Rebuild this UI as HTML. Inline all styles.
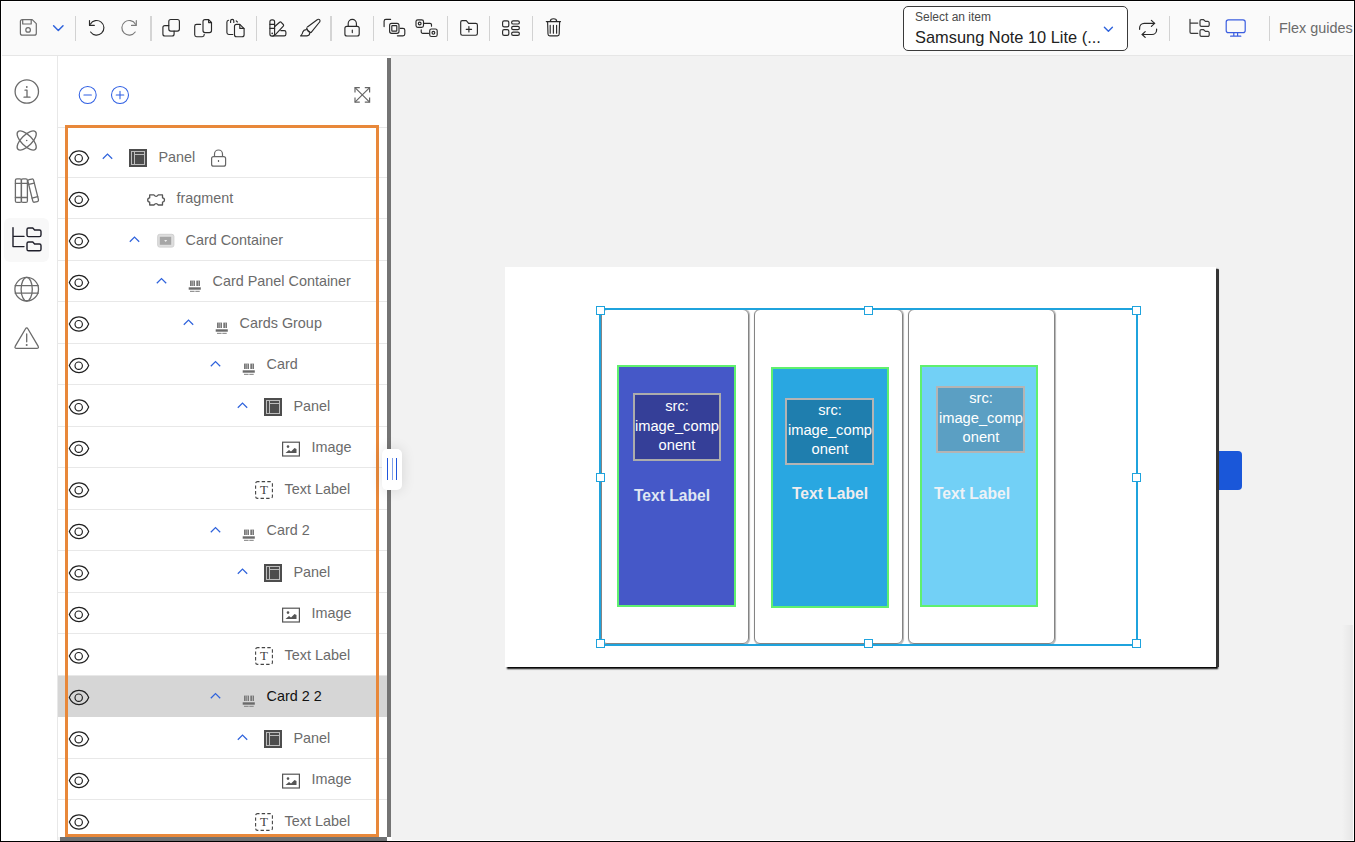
<!DOCTYPE html>
<html><head><meta charset="utf-8">
<style>
html,body{margin:0;padding:0;}
body{width:1355px;height:842px;position:relative;overflow:hidden;background:#f2f2f2;font-family:"Liberation Sans",sans-serif;}
.abs{position:absolute;}
#frame{position:absolute;left:0;top:0;width:1353px;height:840px;border:1px solid #000;pointer-events:none;z-index:50;}
#frame2{position:absolute;left:1px;top:1px;width:1351px;height:838px;border:1px solid #fff;pointer-events:none;z-index:49;}
#toolbar{position:absolute;left:2px;top:2px;width:1351px;height:53px;background:#fafafa;border-bottom:1px solid #e6e6e6;}
#sidebar{position:absolute;left:2px;top:56px;width:55px;height:784px;background:#fff;border-right:1px solid #e8e8e8;}
#tree{position:absolute;left:58px;top:56px;width:329px;height:781px;background:#fff;}
.row{position:absolute;left:58px;width:329px;height:41.5px;box-sizing:border-box;border-bottom:1px solid #e8e8e8;}
.row.sel{background:#d6d6d6;border-bottom:none;}
.rt{position:absolute;height:41.5px;line-height:41.5px;font-size:14.4px;color:#6b6b6b;white-space:nowrap;}
.rt.sel{color:#111;}
.sep{position:absolute;top:16px;width:1px;height:25px;background:#d2d2d2;}
svg{position:absolute;overflow:visible;}
</style></head>
<body>
<div id="toolbar"></div>
<div id="sidebar"></div>
<div id="tree"></div>
<div class="abs" style="left:4px;top:218px;width:45px;height:44px;background:#f8f8f8;border-radius:6px;"></div>
<!-- header line under tree header -->
<div class="abs" style="left:58px;top:127px;width:329px;height:1px;background:#e8e8e8"></div>
<div class="row" style="top:136.0px"></div><div class="rt" style="left:158.5px;top:136.6px">Panel</div><div class="row" style="top:177.5px"></div><div class="rt" style="left:176.5px;top:178.1px">fragment</div><div class="row" style="top:219.0px"></div><div class="rt" style="left:185.5px;top:219.6px">Card Container</div><div class="row" style="top:260.5px"></div><div class="rt" style="left:212.5px;top:261.1px">Card Panel Container</div><div class="row" style="top:302.0px"></div><div class="rt" style="left:239.5px;top:302.6px">Cards Group</div><div class="row" style="top:343.5px"></div><div class="rt" style="left:266.5px;top:344.1px">Card</div><div class="row" style="top:385.0px"></div><div class="rt" style="left:293.5px;top:385.6px">Panel</div><div class="row" style="top:426.5px"></div><div class="rt" style="left:311.5px;top:427.1px">Image</div><div class="row" style="top:468.0px"></div><div class="rt" style="left:284.5px;top:468.6px">Text Label</div><div class="row" style="top:509.5px"></div><div class="rt" style="left:266.5px;top:510.1px">Card 2</div><div class="row" style="top:551.0px"></div><div class="rt" style="left:293.5px;top:551.6px">Panel</div><div class="row" style="top:592.5px"></div><div class="rt" style="left:311.5px;top:593.1px">Image</div><div class="row" style="top:634.0px"></div><div class="rt" style="left:284.5px;top:634.6px">Text Label</div><div class="row sel" style="top:675.5px"></div><div class="rt sel" style="left:266.5px;top:676.1px">Card 2 2</div><div class="row" style="top:717.0px"></div><div class="rt" style="left:293.5px;top:717.6px">Panel</div><div class="row" style="top:758.5px"></div><div class="rt" style="left:311.5px;top:759.1px">Image</div><div class="row" style="top:800.0px"></div><div class="rt" style="left:284.5px;top:800.6px">Text Label</div>
<!-- tree right scrollbar / border -->
<div class="abs" style="left:387px;top:56px;width:4px;height:2px;background:#fff"></div>
<div class="abs" style="left:387px;top:58px;width:4px;height:779px;background:#747474"></div>
<div class="abs" style="left:60px;top:837px;width:327px;height:4px;background:#707274;z-index:60"></div>
<div class="abs" style="left:387px;top:837px;width:5px;height:3px;background:#fff"></div>
<!-- orange outline -->
<div class="abs" style="left:65px;top:125px;width:308px;height:706px;border:3px solid #e8883a;"></div>

<!-- splitter handle -->
<div class="abs" style="left:382px;top:449px;width:20px;height:41px;background:#fff;border-radius:5px;box-shadow:0 0 14px rgba(0,0,0,0.12);"></div>
<div class="abs" style="left:387px;top:458px;width:1px;height:22px;background:#1f55dc"></div>
<div class="abs" style="left:391.5px;top:458px;width:1.5px;height:22px;background:#7fa0ea"></div>
<div class="abs" style="left:396px;top:458px;width:1px;height:22px;background:#1f55dc"></div>

<!-- toolbar separators -->
<div class="sep" style="left:75px"></div>
<div class="sep" style="left:149.5px;width:2px;background:#d4d4d4"></div>
<div class="sep" style="left:256px"></div>
<div class="sep" style="left:330px;width:2px;background:#d4d4d4"></div>
<div class="sep" style="left:373px"></div>
<div class="sep" style="left:447px"></div>
<div class="sep" style="left:489px"></div>
<div class="sep" style="left:532px"></div>
<div class="sep" style="left:1169px"></div>
<div class="sep" style="left:1269px"></div>

<!-- select box -->
<div class="abs" style="left:903px;top:6px;width:223px;height:43px;border:1px solid #3a3a3a;border-radius:5px;background:#fff;"></div>
<div class="abs" style="left:915px;top:10px;font-size:12px;line-height:14px;color:#4a4a4a;">Select an item</div>
<div class="abs" style="left:915px;top:28px;font-size:16.4px;line-height:19px;color:#222;">Samsung Note 10 Lite (...</div>
<div class="abs" style="left:1279px;top:19.5px;font-size:14.4px;line-height:17px;color:#6b6b6b;white-space:nowrap;">Flex guides</div>

<!-- canvas -->
<div class="abs" style="left:1216px;top:451px;width:26px;height:39px;background:#1a57d9;border-radius:0 4px 4px 0;"></div>
<div class="abs" style="left:505px;top:267px;width:711px;height:400px;background:#fff;box-shadow:2px 2px 1.5px #0a0a0a;"></div>
<div class="abs" style="left:1216px;top:268.5px;width:2.6px;height:398px;background:#343434;border-radius:1px 1px 0 0;"></div>
<div class="abs" style="left:1342px;top:625px;width:11px;height:215px;background:linear-gradient(to right,rgba(0,0,0,0),rgba(0,0,0,0.05));"></div>

<!-- cards -->
<div class="abs" style="left:600.5px;top:309px;width:146.5px;height:332.5px;border:1px solid #848484;border-radius:6px;box-shadow:0.5px 0.5px 1px rgba(0,0,0,0.3)"></div>
<div class="abs" style="left:754px;top:309px;width:147px;height:332.5px;border:1px solid #848484;border-radius:6px;box-shadow:0.5px 0.5px 1px rgba(0,0,0,0.3)"></div>
<div class="abs" style="left:908px;top:309px;width:144.5px;height:332.5px;border:1px solid #848484;border-radius:6px;box-shadow:0.5px 0.5px 1px rgba(0,0,0,0.3)"></div>

<div class="abs" style="left:617px;top:365px;width:115px;height:238px;background:#4558c8;border:2px solid #5ff06f;"></div>
<div class="abs" style="left:771px;top:367px;width:114px;height:237px;background:#29a7e1;border:2px solid #5ff06f;"></div>
<div class="abs" style="left:920px;top:365px;width:114px;height:238px;background:#72d0f6;border:2px solid #5ff06f;"></div>

<div class="abs" style="box-sizing:border-box;left:633px;top:393px;width:88px;height:67.5px;background:#353f98;border:2px solid #acacac;"></div>
<div class="abs" style="box-sizing:border-box;left:785px;top:398px;width:89.3px;height:66.8px;background:#1f7eae;border:2px solid #b4b4b4;"></div>
<div class="abs" style="box-sizing:border-box;left:936px;top:386px;width:89px;height:67px;background:#5b9fc3;border:2px solid #b4b4b4;"></div>

<div class="abs" style="left:633px;top:397px;width:88px;text-align:center;font-size:14.7px;line-height:19.5px;color:#fff;">src:<br>image_comp<br>onent</div>
<div class="abs" style="left:785.5px;top:401px;width:89px;text-align:center;font-size:14.7px;line-height:19.5px;color:#fff;">src:<br>image_comp<br>onent</div>
<div class="abs" style="left:936.5px;top:389px;width:89px;text-align:center;font-size:14.7px;line-height:19.5px;color:#fff;">src:<br>image_comp<br>onent</div>

<div class="abs" style="left:634px;top:487px;font-size:15.6px;line-height:18px;font-weight:bold;color:#dfe6f2;white-space:nowrap;">Text Label</div>
<div class="abs" style="left:792px;top:485px;font-size:15.6px;line-height:18px;font-weight:bold;color:#f0ecee;white-space:nowrap;">Text Label</div>
<div class="abs" style="left:934px;top:485px;font-size:15.6px;line-height:18px;font-weight:bold;color:#eef2f6;white-space:nowrap;">Text Label</div>

<!-- selection box -->
<div class="abs" style="left:599px;top:308px;width:535px;height:334px;border:2px solid #1fa3dd;"></div>
<div class="abs" style="left:596px;top:306px;width:7px;height:7px;border:1px solid #1fa3dd;background:#fff"></div>
<div class="abs" style="left:864px;top:306px;width:7px;height:7px;border:1px solid #1fa3dd;background:#fff"></div>
<div class="abs" style="left:1132px;top:306px;width:7px;height:7px;border:1px solid #1fa3dd;background:#fff"></div>
<div class="abs" style="left:596px;top:473px;width:7px;height:7px;border:1px solid #1fa3dd;background:#fff"></div>
<div class="abs" style="left:1132px;top:473px;width:7px;height:7px;border:1px solid #1fa3dd;background:#fff"></div>
<div class="abs" style="left:596px;top:639px;width:7px;height:7px;border:1px solid #1fa3dd;background:#fff"></div>
<div class="abs" style="left:864px;top:639px;width:7px;height:7px;border:1px solid #1fa3dd;background:#fff"></div>
<div class="abs" style="left:1132px;top:639px;width:7px;height:7px;border:1px solid #1fa3dd;background:#fff"></div>


<!-- toolbar & sidebar icons -->
<svg style="left:0;top:0" width="1355" height="842">
<g fill="none" stroke-linecap="round" stroke-linejoin="round">
 <!-- save -->
 <g stroke="#6b6b6b" stroke-width="1.2">
  <path d="M22.4 19.6 H32.2 L36.3 23.7 V33.2 A2 2 0 0 1 34.3 35.2 H22.4 A2 2 0 0 1 20.4 33.2 V21.6 A2 2 0 0 1 22.4 19.6 Z"/>
  <path d="M22.7 19.8 V24 H31.2 V19.8"/>
  <circle cx="28.1" cy="29.9" r="2.3"/>
 </g>
 <path d="M53.6 25.8 L58.3 30.5 L63 25.8" stroke="#2f63dc" stroke-width="1.5"/>
 <!-- undo / redo -->
 <g stroke="#2a2a2a" stroke-width="1.15">
  <path d="M89.5 20.6 V25.4 H94.3"/>
  <path d="M90.3 24.2 A7.3 7.3 0 1 1 90.6 32"/>
 </g>
 <g stroke="#7a7a7a" stroke-width="1.15">
  <path d="M136.3 20.6 V25.4 H131.5"/>
  <path d="M135.5 24.2 A7.3 7.3 0 1 0 135.2 32"/>
 </g>
 <!-- copy 1 -->
 <g stroke="#2a2a2a" stroke-width="1.15">
  <rect x="168.8" y="19.5" width="10.6" height="11.6" rx="2"/>
  <path d="M168.8 25.6 H164.9 A2 2 0 0 0 162.9 27.6 V34 A2 2 0 0 0 164.9 36 H172.1 A2 2 0 0 0 174.1 34 V31.1"/>
 </g>
 <!-- copy 2 -->
 <g stroke="#2a2a2a" stroke-width="1.15">
  <path d="M205 19.6 H208.6 L211.5 22.5 V30.6 A2 2 0 0 1 209.5 32.6 H205 A2 2 0 0 1 203 30.6 V21.6 A2 2 0 0 1 205 19.6 Z"/>
  <path d="M208.6 19.8 V22.6 H211.4"/>
  <path d="M200.6 24.4 H196.6 A1.9 1.9 0 0 0 194.7 26.3 V34.8 A1.9 1.9 0 0 0 196.6 36.7 H202.3 A1.9 1.9 0 0 0 204.2 34.8 V34.3"/>
 </g>
 <!-- copy 3 (paste) -->
 <g stroke="#2a2a2a" stroke-width="1.15">
  <path d="M228.6 20.3 A1.9 1.9 0 0 0 226.9 22.2 V32.6 A1.9 1.9 0 0 0 228.8 34.5 H232.8"/>
  <path d="M230.6 22.4 V21 A1.6 1.6 0 0 1 233.8 21 V22.4"/>
  <path d="M236.2 20.9 L237.4 22"/>
  <path d="M236.5 24.3 H239.8 L244.1 28.6 V34.7 A2 2 0 0 1 242.1 36.7 H236.5 A2 2 0 0 1 234.5 34.7 V26.3 A2 2 0 0 1 236.5 24.3 Z"/>
  <path d="M239.8 24.5 V28.4 H243.9"/>
 </g>
 <!-- palette -->
 <g stroke="#2a2a2a" stroke-width="1.15">
  <rect x="269.9" y="19.8" width="4.7" height="16.3" rx="2"/>
  <path d="M269.9 24.3 H274.6 M269.9 28.3 H274.6"/>
  <path d="M274.8 26.5 L279.6 22.3 A1.2 1.2 0 0 1 281.2 22.3 L283.3 24.5 A1.2 1.2 0 0 1 283.3 26.1 L275.4 34.6"/>
  <path d="M280.8 30.6 H284.3 A1.6 1.6 0 0 1 285.9 32.2 V34.3 A1.6 1.6 0 0 1 284.3 35.9 H273"/>
 </g>
 <circle cx="272.2" cy="33.4" r="0.8" fill="#2a2a2a"/>
 <!-- brush -->
 <g stroke="#2a2a2a" stroke-width="1.15">
  <path d="M307.4 27 L317.2 19.8 A1.6 1.6 0 0 1 319.6 22 L311.2 32.4"/>
  <path d="M306.6 28 Q307.5 31.5 310.6 32.6"/>
  <path d="M306.3 29.6 Q303.6 29.8 302.8 32 Q302.4 34.6 300.6 35.9 H307 Q309.6 35.6 309.7 33"/>
 </g>
 <!-- lock -->
 <g stroke="#2a2a2a" stroke-width="1.15">
  <path d="M348.2 26.3 V23.5 A4.1 4.1 0 0 1 356.4 23.5 V26.3"/>
  <rect x="344.9" y="26.3" width="14.3" height="9.7" rx="2"/>
  <path d="M352.3 30 V32.6"/>
 </g>
 <!-- group -->
 <g stroke="#2a2a2a" stroke-width="1.15">
  <path d="M384.1 26.6 V21.2 A1.8 1.8 0 0 1 385.9 19.4 H390.6"/>
  <rect x="389.6" y="23.4" width="9.4" height="9.9" rx="2"/>
  <rect x="391.8" y="25.6" width="5" height="5.5" rx="0.6"/>
  <path d="M397.4 35.8 H403 A1.8 1.8 0 0 0 404.8 34 V30.1 A1.8 1.8 0 0 0 403 28.3 H400.2"/>
 </g>
 <!-- ungroup -->
 <g stroke="#2a2a2a" stroke-width="1.15">
  <rect x="416" y="19.8" width="7.5" height="7.5" rx="1.8"/>
  <circle cx="419.7" cy="23.5" r="1.4"/>
  <path d="M424 23.3 H430 A1.5 1.5 0 0 1 431.5 24.8 V26.2"/>
  <path d="M421.2 29.8 V31.8 A1.5 1.5 0 0 0 422.7 33.3 H428.6"/>
  <rect x="429.7" y="29" width="7.5" height="7.5" rx="1.8"/>
  <circle cx="433.4" cy="32.8" r="1.4"/>
 </g>
 <!-- folder add -->
 <g stroke="#2a2a2a" stroke-width="1.15">
  <path d="M462.2 20.6 H466.3 L468.6 23.4 H475.8 A1.6 1.6 0 0 1 477.4 25 V33.6 A1.6 1.6 0 0 1 475.8 35.2 H462.3 A1.6 1.6 0 0 1 460.7 33.6 V22.2 A1.6 1.6 0 0 1 462.2 20.6 Z"/>
  <path d="M468.9 26.6 V32 M466.2 29.3 H471.6"/>
 </g>
 <!-- grid -->
 <g stroke="#2a2a2a" stroke-width="1.15">
  <rect x="502.6" y="20.8" width="6.2" height="6.1" rx="1.6"/>
  <rect x="502.6" y="29.6" width="6.2" height="5.7" rx="1.6"/>
  <rect x="511.6" y="20.8" width="7.8" height="3.2" rx="1.6"/>
  <rect x="511.6" y="26.4" width="7.8" height="3.2" rx="1.6"/>
  <rect x="511.6" y="32.1" width="7.8" height="3.2" rx="1.6"/>
 </g>
 <!-- trash -->
 <g stroke="#2a2a2a" stroke-width="1.15">
  <path d="M546.3 21.6 H560.5"/>
  <path d="M550.3 21.4 A3.2 2.6 0 0 1 556.7 21.4"/>
  <path d="M547.6 22 L548 34 A1.8 1.8 0 0 0 549.8 35.8 H557.4 A1.8 1.8 0 0 0 559.2 34 L559.6 22"/>
  <path d="M550.2 25.2 V33.2 M553.4 25.2 V33.2 M556.6 25.2 V33.2"/>
 </g>
 <!-- select chevron -->
 <path d="M1104.4 27.2 L1108.4 31.2 L1112.4 27.2" stroke="#2f63dc" stroke-width="1.4"/>
 <!-- swap -->
 <g stroke="#2a2a2a" stroke-width="1.2">
  <path d="M1139.6 29.3 V28 A4.6 4.6 0 0 1 1144.2 23.4 H1154.6"/>
  <path d="M1151.4 20.4 L1154.6 23.4 L1151.4 26.4"/>
  <path d="M1156.6 29.1 V29.9 A4.6 4.6 0 0 1 1152 34.5 H1142.2"/>
  <path d="M1145.2 31.6 L1142.2 34.5 L1145.2 37.4"/>
 </g>
 <!-- tree folder (toolbar) -->
 <g stroke="#3a3a3a" stroke-width="1.2">
  <path d="M1190 19.3 V32 A1.3 1.3 0 0 0 1191.3 33.3 H1197.8 M1190 23.1 H1197.8"/>
  <path d="M1201.4 19.7 H1203.6 L1205.4 21.4 H1207.8 A1.4 1.4 0 0 1 1209.2 22.8 V25 A1.4 1.4 0 0 1 1207.8 26.4 H1201.4 A1.4 1.4 0 0 1 1200 25 V21.1 A1.4 1.4 0 0 1 1201.4 19.7 Z"/>
  <path d="M1201.4 29.7 H1203.6 L1205.4 31.4 H1207.8 A1.4 1.4 0 0 1 1209.2 32.8 V35 A1.4 1.4 0 0 1 1207.8 36.4 H1201.4 A1.4 1.4 0 0 1 1200 35 V31.1 A1.4 1.4 0 0 1 1201.4 29.7 Z"/>
 </g>
 <!-- monitor -->
 <g stroke="#3b5ee0" stroke-width="1.2">
  <rect x="1226.2" y="19.8" width="19" height="12.9" rx="2.2"/>
  <path d="M1233.8 32.8 V36 M1237.6 32.8 V36 M1230.6 36.2 H1240.8"/>
 </g>
 <!-- sidebar -->
 <g stroke="#6b6b6b" stroke-width="1.3">
  <circle cx="26.8" cy="91.5" r="11.7"/>
  <path d="M25 90.2 H27 V97 M24 97.2 H30"/>
  <ellipse cx="26.7" cy="140.5" rx="12.4" ry="5.4" transform="rotate(45 26.7 140.5)"/>
  <ellipse cx="26.7" cy="140.5" rx="12.4" ry="5.4" transform="rotate(-45 26.7 140.5)"/>
  <!-- library -->
  <rect x="15.4" y="178.8" width="6" height="23.6" rx="1.5"/>
  <rect x="21.4" y="178.8" width="6" height="23.6" rx="1.5"/>
  <path d="M15.4 183.3 H27.4 M15.4 197.5 H27.4"/>
  <g transform="rotate(-14 33.2 190.6)"><rect x="30.3" y="179" width="5.8" height="23.2" rx="1.5"/><path d="M30.3 183.5 H36.1 M30.3 197.6 H36.1"/></g>
  <!-- globe -->
  <circle cx="26.7" cy="289.2" r="11.8"/>
  <ellipse cx="26.7" cy="289.2" rx="5.6" ry="11.8"/>
  <path d="M15.2 285.7 H38.2 M15.2 293.2 H38.2"/>
  <!-- warning -->
  <path d="M25.4 329 Q26.7 326.9 28 329 L38.1 346.2 Q39.2 348.3 36.8 348.3 H16.6 Q14.2 348.3 15.3 346.2 Z"/>
  <path d="M26.7 334 V341.8"/>
 </g>
 <circle cx="26.8" cy="87" r="0.9" fill="#6b6b6b"/>
 <circle cx="26.7" cy="140.5" r="0.8" fill="#6b6b6b"/>
 <circle cx="26.7" cy="344.9" r="1" fill="#6b6b6b"/>
 <!-- sidebar tree (selected) -->
 <g stroke="#1f1f2a" stroke-width="1.4">
  <path d="M13 227.6 V246.6 H24 M13 236.4 H24"/>
  <path d="M28.6 228 H32.8 L34.6 230 H39.4 A1.6 1.6 0 0 1 41 231.6 V235 A1.6 1.6 0 0 1 39.4 236.6 H28.6 A1.6 1.6 0 0 1 27 235 V229.6 A1.6 1.6 0 0 1 28.6 228 Z"/>
  <path d="M28.6 242 H32.8 L34.6 244 H39.4 A1.6 1.6 0 0 1 41 245.6 V249.2 A1.6 1.6 0 0 1 39.4 250.8 H28.6 A1.6 1.6 0 0 1 27 249.2 V243.6 A1.6 1.6 0 0 1 28.6 242 Z"/>
 </g>
 <!-- tree header -->
 <g stroke="#2f5fe3" stroke-width="1.05">
  <circle cx="87.7" cy="95" r="8.5"/>
  <path d="M83.9 95 H91.4"/>
  <circle cx="120" cy="95" r="8.5"/>
  <path d="M116.2 95 H123.8 M120 91.2 V98.8"/>
 </g>
 <g stroke="#666" stroke-width="1.2" stroke-linecap="butt" stroke-linejoin="miter">
  <path d="M355 87.6 L369.6 102.2 M369.6 87.6 L355 102.2"/>
  <path d="M355 92.4 V87.6 H359.8 M364.8 87.6 H369.6 V92.4 M369.6 97.4 V102.2 H364.8 M359.8 102.2 H355 V97.4"/>
 </g>
</g>
</svg>

<!-- tree icons -->
<svg style="left:0;top:0" width="1355" height="842">
<g fill="none" stroke="#1f1f1f" stroke-width="1.15"><path d="M69.3 158.0 C73 148.5 85 148.5 88.7 158.0 C85 167.5 73 167.5 69.3 158.0 Z"/><circle cx="78.7" cy="158.2" r="3.7"/></g><path d="M102.8 158.75 L107.5 154.05 L112.2 158.75" fill="none" stroke="#2f63dc" stroke-width="1.25"/><rect x="129" y="149" width="18" height="18" fill="#4d4d4d"/><rect x="131.5" y="151.5" width="13" height="13" fill="none" stroke="#bdbdbd" stroke-width="1"/><path d="M134.5 152 V164 M135 154.5 H144" stroke="#bdbdbd" stroke-width="1"/><g fill="none" stroke="#666" stroke-width="1.2"><path d="M214.5 156.5 V154 a4 4 0 0 1 8 0 V156.5"/><rect x="211.6" y="156.6" width="14" height="9.6" rx="2"/><path d="M218.5 160 V162"/></g><g fill="none" stroke="#1f1f1f" stroke-width="1.15"><path d="M69.3 199.5 C73 190.0 85 190.0 88.7 199.5 C85 209.0 73 209.0 69.3 199.5 Z"/><circle cx="78.7" cy="199.7" r="3.7"/></g><path d="M149.7 194.89999999999998 H153.9 Q156.1 197.79999999999998 158.29999999999998 194.89999999999998 H162.5 V197.79999999999998 Q164.5 198.0 164.5 200.0 Q164.5 202.0 162.5 202.2 V205.0 H158.29999999999998 Q156.1 202.1 153.9 205.0 H149.7 V202.2 Q147.7 202.0 147.7 200.0 Q147.7 198.0 149.7 197.79999999999998 Z" fill="none" stroke="#555" stroke-width="1.3" stroke-linejoin="round"/><g fill="none" stroke="#1f1f1f" stroke-width="1.15"><path d="M69.3 241.0 C73 231.5 85 231.5 88.7 241.0 C85 250.5 73 250.5 69.3 241.0 Z"/><circle cx="78.7" cy="241.2" r="3.7"/></g><path d="M129.8 241.75 L134.5 237.05 L139.2 241.75" fill="none" stroke="#2f63dc" stroke-width="1.25"/><rect x="157.7" y="234.3" width="16.2" height="12.8" rx="2" fill="#dedede" stroke="#d0d0d0" stroke-width="1"/><rect x="159.79999999999998" y="236.8" width="11.4" height="8" fill="#a6a6a6"/><path d="M164.2 240.0 H167.2 L165.7 242.0 Z" fill="#efefef"/><g fill="none" stroke="#1f1f1f" stroke-width="1.15"><path d="M69.3 282.5 C73 273.0 85 273.0 88.7 282.5 C85 292.0 73 292.0 69.3 282.5 Z"/><circle cx="78.7" cy="282.7" r="3.7"/></g><path d="M156.8 283.25 L161.5 278.55 L166.2 283.25" fill="none" stroke="#2f63dc" stroke-width="1.25"/><g><rect x="190.0" y="280.6" width="5" height="5.4" fill="#777"/><rect x="196.29999999999998" y="280.6" width="3.7" height="5.4" fill="#777"/><rect x="191.7" y="280.6" width="0.5" height="5.4" fill="#e0e0e0"/><rect x="193.29999999999998" y="280.6" width="0.5" height="5.4" fill="#e0e0e0"/><rect x="198.0" y="280.6" width="0.5" height="5.4" fill="#e0e0e0"/><rect x="188.7" y="287.3" width="12.1" height="2.4" fill="#6a6a6a"/><rect x="190.0" y="290.8" width="4.6" height="1.1" fill="#8a8a8a"/><rect x="195.29999999999998" y="290.8" width="4.4" height="1.1" fill="#8a8a8a"/></g><g fill="none" stroke="#1f1f1f" stroke-width="1.15"><path d="M69.3 324.0 C73 314.5 85 314.5 88.7 324.0 C85 333.5 73 333.5 69.3 324.0 Z"/><circle cx="78.7" cy="324.2" r="3.7"/></g><path d="M183.8 324.75 L188.5 320.05 L193.2 324.75" fill="none" stroke="#2f63dc" stroke-width="1.25"/><g><rect x="217.0" y="322.6" width="5" height="5.4" fill="#777"/><rect x="223.29999999999998" y="322.6" width="3.7" height="5.4" fill="#777"/><rect x="218.7" y="322.6" width="0.5" height="5.4" fill="#e0e0e0"/><rect x="220.29999999999998" y="322.6" width="0.5" height="5.4" fill="#e0e0e0"/><rect x="225.0" y="322.6" width="0.5" height="5.4" fill="#e0e0e0"/><rect x="215.7" y="329.3" width="12.1" height="2.4" fill="#6a6a6a"/><rect x="217.0" y="332.8" width="4.6" height="1.1" fill="#8a8a8a"/><rect x="222.29999999999998" y="332.8" width="4.4" height="1.1" fill="#8a8a8a"/></g><g fill="none" stroke="#1f1f1f" stroke-width="1.15"><path d="M69.3 365.5 C73 356.0 85 356.0 88.7 365.5 C85 375.0 73 375.0 69.3 365.5 Z"/><circle cx="78.7" cy="365.7" r="3.7"/></g><path d="M210.8 366.25 L215.5 361.55 L220.2 366.25" fill="none" stroke="#2f63dc" stroke-width="1.25"/><g><rect x="244.0" y="363.6" width="5" height="5.4" fill="#777"/><rect x="250.29999999999998" y="363.6" width="3.7" height="5.4" fill="#777"/><rect x="245.7" y="363.6" width="0.5" height="5.4" fill="#e0e0e0"/><rect x="247.29999999999998" y="363.6" width="0.5" height="5.4" fill="#e0e0e0"/><rect x="252.0" y="363.6" width="0.5" height="5.4" fill="#e0e0e0"/><rect x="242.7" y="370.3" width="12.1" height="2.4" fill="#6a6a6a"/><rect x="244.0" y="373.8" width="4.6" height="1.1" fill="#8a8a8a"/><rect x="249.29999999999998" y="373.8" width="4.4" height="1.1" fill="#8a8a8a"/></g><g fill="none" stroke="#1f1f1f" stroke-width="1.15"><path d="M69.3 407.0 C73 397.5 85 397.5 88.7 407.0 C85 416.5 73 416.5 69.3 407.0 Z"/><circle cx="78.7" cy="407.2" r="3.7"/></g><path d="M237.8 407.75 L242.5 403.05 L247.2 407.75" fill="none" stroke="#2f63dc" stroke-width="1.25"/><rect x="264" y="398" width="18" height="18" fill="#4d4d4d"/><rect x="266.5" y="400.5" width="13" height="13" fill="none" stroke="#bdbdbd" stroke-width="1"/><path d="M269.5 401 V413 M270 403.5 H279" stroke="#bdbdbd" stroke-width="1"/><g fill="none" stroke="#1f1f1f" stroke-width="1.15"><path d="M69.3 448.5 C73 439.0 85 439.0 88.7 448.5 C85 458.0 73 458.0 69.3 448.5 Z"/><circle cx="78.7" cy="448.7" r="3.7"/></g><rect x="282.6" y="442.2" width="16.8" height="13.8" fill="none" stroke="#555" stroke-width="1.2"/><circle cx="288" cy="446.6" r="1.3" fill="#555"/><path d="M285.5 453.1 L289 450.1 L291 451.6 L294.5 448.1 L296.5 449.1 V453.1 Z" fill="#555"/><g fill="none" stroke="#1f1f1f" stroke-width="1.15"><path d="M69.3 490.0 C73 480.5 85 480.5 88.7 490.0 C85 499.5 73 499.5 69.3 490.0 Z"/><circle cx="78.7" cy="490.2" r="3.7"/></g><rect x="255.6" y="481.6" width="16.8" height="16.8" rx="2" fill="none" stroke="#444" stroke-width="1.1" stroke-dasharray="3.4 2.2" stroke-dashoffset="1.5"/><text x="264" y="494.2" font-family="Liberation Serif" font-size="13" text-anchor="middle" fill="#404040">T</text><g fill="none" stroke="#1f1f1f" stroke-width="1.15"><path d="M69.3 531.5 C73 522.0 85 522.0 88.7 531.5 C85 541.0 73 541.0 69.3 531.5 Z"/><circle cx="78.7" cy="531.7" r="3.7"/></g><path d="M210.8 532.25 L215.5 527.55 L220.2 532.25" fill="none" stroke="#2f63dc" stroke-width="1.25"/><g><rect x="244.0" y="529.6" width="5" height="5.4" fill="#777"/><rect x="250.29999999999998" y="529.6" width="3.7" height="5.4" fill="#777"/><rect x="245.7" y="529.6" width="0.5" height="5.4" fill="#e0e0e0"/><rect x="247.29999999999998" y="529.6" width="0.5" height="5.4" fill="#e0e0e0"/><rect x="252.0" y="529.6" width="0.5" height="5.4" fill="#e0e0e0"/><rect x="242.7" y="536.3" width="12.1" height="2.4" fill="#6a6a6a"/><rect x="244.0" y="539.8" width="4.6" height="1.1" fill="#8a8a8a"/><rect x="249.29999999999998" y="539.8" width="4.4" height="1.1" fill="#8a8a8a"/></g><g fill="none" stroke="#1f1f1f" stroke-width="1.15"><path d="M69.3 573.0 C73 563.5 85 563.5 88.7 573.0 C85 582.5 73 582.5 69.3 573.0 Z"/><circle cx="78.7" cy="573.2" r="3.7"/></g><path d="M237.8 573.75 L242.5 569.05 L247.2 573.75" fill="none" stroke="#2f63dc" stroke-width="1.25"/><rect x="264" y="564" width="18" height="18" fill="#4d4d4d"/><rect x="266.5" y="566.5" width="13" height="13" fill="none" stroke="#bdbdbd" stroke-width="1"/><path d="M269.5 567 V579 M270 569.5 H279" stroke="#bdbdbd" stroke-width="1"/><g fill="none" stroke="#1f1f1f" stroke-width="1.15"><path d="M69.3 614.5 C73 605.0 85 605.0 88.7 614.5 C85 624.0 73 624.0 69.3 614.5 Z"/><circle cx="78.7" cy="614.7" r="3.7"/></g><rect x="282.6" y="608.2" width="16.8" height="13.8" fill="none" stroke="#555" stroke-width="1.2"/><circle cx="288" cy="612.6" r="1.3" fill="#555"/><path d="M285.5 619.1 L289 616.1 L291 617.6 L294.5 614.1 L296.5 615.1 V619.1 Z" fill="#555"/><g fill="none" stroke="#1f1f1f" stroke-width="1.15"><path d="M69.3 656.0 C73 646.5 85 646.5 88.7 656.0 C85 665.5 73 665.5 69.3 656.0 Z"/><circle cx="78.7" cy="656.2" r="3.7"/></g><rect x="255.6" y="647.6" width="16.8" height="16.8" rx="2" fill="none" stroke="#444" stroke-width="1.1" stroke-dasharray="3.4 2.2" stroke-dashoffset="1.5"/><text x="264" y="660.2" font-family="Liberation Serif" font-size="13" text-anchor="middle" fill="#404040">T</text><g fill="none" stroke="#1f1f1f" stroke-width="1.15"><path d="M69.3 697.5 C73 688.0 85 688.0 88.7 697.5 C85 707.0 73 707.0 69.3 697.5 Z"/><circle cx="78.7" cy="697.7" r="3.7"/></g><path d="M210.8 698.25 L215.5 693.55 L220.2 698.25" fill="none" stroke="#2f63dc" stroke-width="1.25"/><g><rect x="244.0" y="695.6" width="5" height="5.4" fill="#777"/><rect x="250.29999999999998" y="695.6" width="3.7" height="5.4" fill="#777"/><rect x="245.7" y="695.6" width="0.5" height="5.4" fill="#e0e0e0"/><rect x="247.29999999999998" y="695.6" width="0.5" height="5.4" fill="#e0e0e0"/><rect x="252.0" y="695.6" width="0.5" height="5.4" fill="#e0e0e0"/><rect x="242.7" y="702.3" width="12.1" height="2.4" fill="#6a6a6a"/><rect x="244.0" y="705.8" width="4.6" height="1.1" fill="#8a8a8a"/><rect x="249.29999999999998" y="705.8" width="4.4" height="1.1" fill="#8a8a8a"/></g><g fill="none" stroke="#1f1f1f" stroke-width="1.15"><path d="M69.3 739.0 C73 729.5 85 729.5 88.7 739.0 C85 748.5 73 748.5 69.3 739.0 Z"/><circle cx="78.7" cy="739.2" r="3.7"/></g><path d="M237.8 739.75 L242.5 735.05 L247.2 739.75" fill="none" stroke="#2f63dc" stroke-width="1.25"/><rect x="264" y="730" width="18" height="18" fill="#4d4d4d"/><rect x="266.5" y="732.5" width="13" height="13" fill="none" stroke="#bdbdbd" stroke-width="1"/><path d="M269.5 733 V745 M270 735.5 H279" stroke="#bdbdbd" stroke-width="1"/><g fill="none" stroke="#1f1f1f" stroke-width="1.15"><path d="M69.3 780.5 C73 771.0 85 771.0 88.7 780.5 C85 790.0 73 790.0 69.3 780.5 Z"/><circle cx="78.7" cy="780.7" r="3.7"/></g><rect x="282.6" y="774.2" width="16.8" height="13.8" fill="none" stroke="#555" stroke-width="1.2"/><circle cx="288" cy="778.6" r="1.3" fill="#555"/><path d="M285.5 785.1 L289 782.1 L291 783.6 L294.5 780.1 L296.5 781.1 V785.1 Z" fill="#555"/><g fill="none" stroke="#1f1f1f" stroke-width="1.15"><path d="M69.3 822.0 C73 812.5 85 812.5 88.7 822.0 C85 831.5 73 831.5 69.3 822.0 Z"/><circle cx="78.7" cy="822.2" r="3.7"/></g><rect x="255.6" y="813.6" width="16.8" height="16.8" rx="2" fill="none" stroke="#444" stroke-width="1.1" stroke-dasharray="3.4 2.2" stroke-dashoffset="1.5"/><text x="264" y="826.2" font-family="Liberation Serif" font-size="13" text-anchor="middle" fill="#404040">T</text>
</svg>

<div id="frame2"></div>
<div id="frame"></div>
</body></html>
